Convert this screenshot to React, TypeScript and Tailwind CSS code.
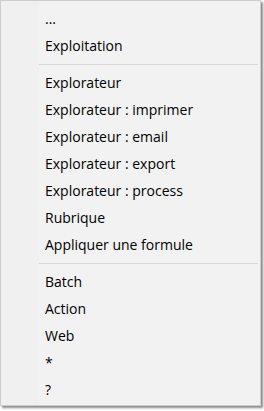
const groups = [
  ["...", "Exploitation"],
  [
    "Explorateur",
    "Explorateur : imprimer",
    "Explorateur : email",
    "Explorateur : export",
    "Explorateur : process",
    "Rubrique",
    "Appliquer une formule",
  ],
  ["Batch", "Action", "Web", "*", "?"],
];

function MenuItem({ label }: { label: string }) {
  return (
    <div className="flex h-[27px] items-center pl-[44px] text-[14px] leading-none text-[#000]">
      {label}
    </div>
  );
}

export default function App() {
  return (
    <div className="h-[411px] w-[264px] overflow-hidden bg-[#ffffff]">
      <div
        className="relative h-[406px] w-[261px] border border-[#cccccc] bg-[#f2f2f2] py-[4px] shadow-[2px_2px_2px_rgba(0,0,0,0.45)]"
        style={{ fontFamily: '"Open Sans", "Noto Sans", sans-serif' }}
      >
        <div className="absolute inset-y-0 left-0 w-[38px] bg-[#f0f0f0]" />
        <div className="relative">
          {groups.map((items, i) => (
            <div key={i}>
              {i > 0 && (
                <div className="flex h-[10px] items-center pl-[38px] pr-[2px]">
                  <div className="h-px w-full bg-[#d7d7d7]" />
                </div>
              )}
              {items.map((label) => (
                <MenuItem key={label} label={label} />
              ))}
            </div>
          ))}
        </div>
      </div>
    </div>
  );
}
